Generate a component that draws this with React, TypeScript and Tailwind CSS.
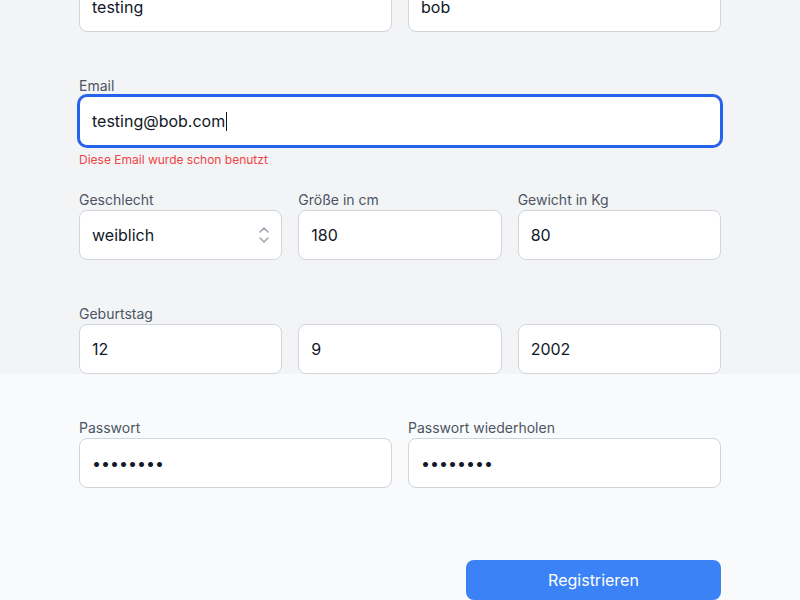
import React from "react";

const inputCls =
  "h-[50px] w-full rounded-lg border border-[#d1d5db] bg-white px-3 text-base text-[#111827] outline-none";

function Label({ children }: { children: React.ReactNode }) {
  return <label className="block pt-px text-sm leading-5 text-[#4b5563]">{children}</label>;
}

function Field({ label, value, type = "text" }: { label?: string; value: string; type?: string }) {
  return (
    <div className="flex flex-col">
      {label && <Label>{label}</Label>}
      <input type={type} defaultValue={value} className={inputCls} />
    </div>
  );
}

function ChevronUpDown() {
  return (
    <svg width="12" height="18" viewBox="0 0 12 18" fill="none" stroke="#9ca3af" strokeWidth="1.5" strokeLinecap="round" strokeLinejoin="round">
      <path d="M2 6 6 2 10 6" />
      <path d="M2 12 6 16 10 12" />
    </svg>
  );
}

export default function App() {
  return (
    <div className="min-h-screen bg-[#f9fafb]" style={{ fontFamily: "Inter, 'Noto Sans', sans-serif" }}>
      {/* obere Hälfte */}
      <div className="flex flex-col bg-[#f3f4f6]">
        <div className="mx-auto -mt-[39px] flex w-[642px] flex-col">
          <div className="grid grid-cols-2 gap-4">
            <Field label="Vorname" value="testing" />
            <Field label="Nachname" value="bob" />
          </div>

          <div className="mt-[43px] flex flex-col">
            <Label>Email</Label>
            <div className="flex h-[50px] w-full items-center rounded-lg border border-[#2563eb] bg-white px-3 text-base text-[#111827] ring-2 ring-[#2563eb]">
              <span>testing@bob.com</span>
              <span className="ml-px h-[19px] w-px bg-gray-900" />
            </div>
            <p className="mt-[6px] text-xs leading-4 text-[#ef4444]">Diese Email wurde schon benutzt</p>
          </div>

          <div className="mt-[21px] grid grid-cols-3 gap-4">
            <div className="flex flex-col">
              <Label>Geschlecht</Label>
              <div className="relative">
                <select defaultValue="weiblich" className={inputCls + " appearance-none"}>
                  <option value="männlich">männlich</option>
                  <option value="weiblich">weiblich</option>
                </select>
                <div className="pointer-events-none absolute right-[12px] top-[16px]">
                  <ChevronUpDown />
                </div>
              </div>
            </div>
            <Field label="Größe in cm" value="180" />
            <Field label="Gewicht in Kg" value="80" />
          </div>

          <div className="mt-[43px] flex flex-col">
            <Label>Geburtstag</Label>
            <div className="grid grid-cols-3 gap-4">
              <input defaultValue="12" className={inputCls} />
              <input defaultValue="9" className={inputCls} />
              <input defaultValue="2002" className={inputCls} />
            </div>
          </div>
        </div>
      </div>

      {/* untere Hälfte */}
      <div className="mx-auto flex w-[642px] flex-col pt-[43px]">
        <div className="grid grid-cols-2 gap-4">
          <Field label="Passwort" value="12345678" type="password" />
          <Field label="Passwort wiederholen" value="12345678" type="password" />
        </div>
        <div className="mt-[72px] flex justify-end">
          <button className="h-10 w-[255px] rounded-lg bg-[#3b82f6] text-base text-white">Registrieren</button>
        </div>
      </div>
    </div>
  );
}
